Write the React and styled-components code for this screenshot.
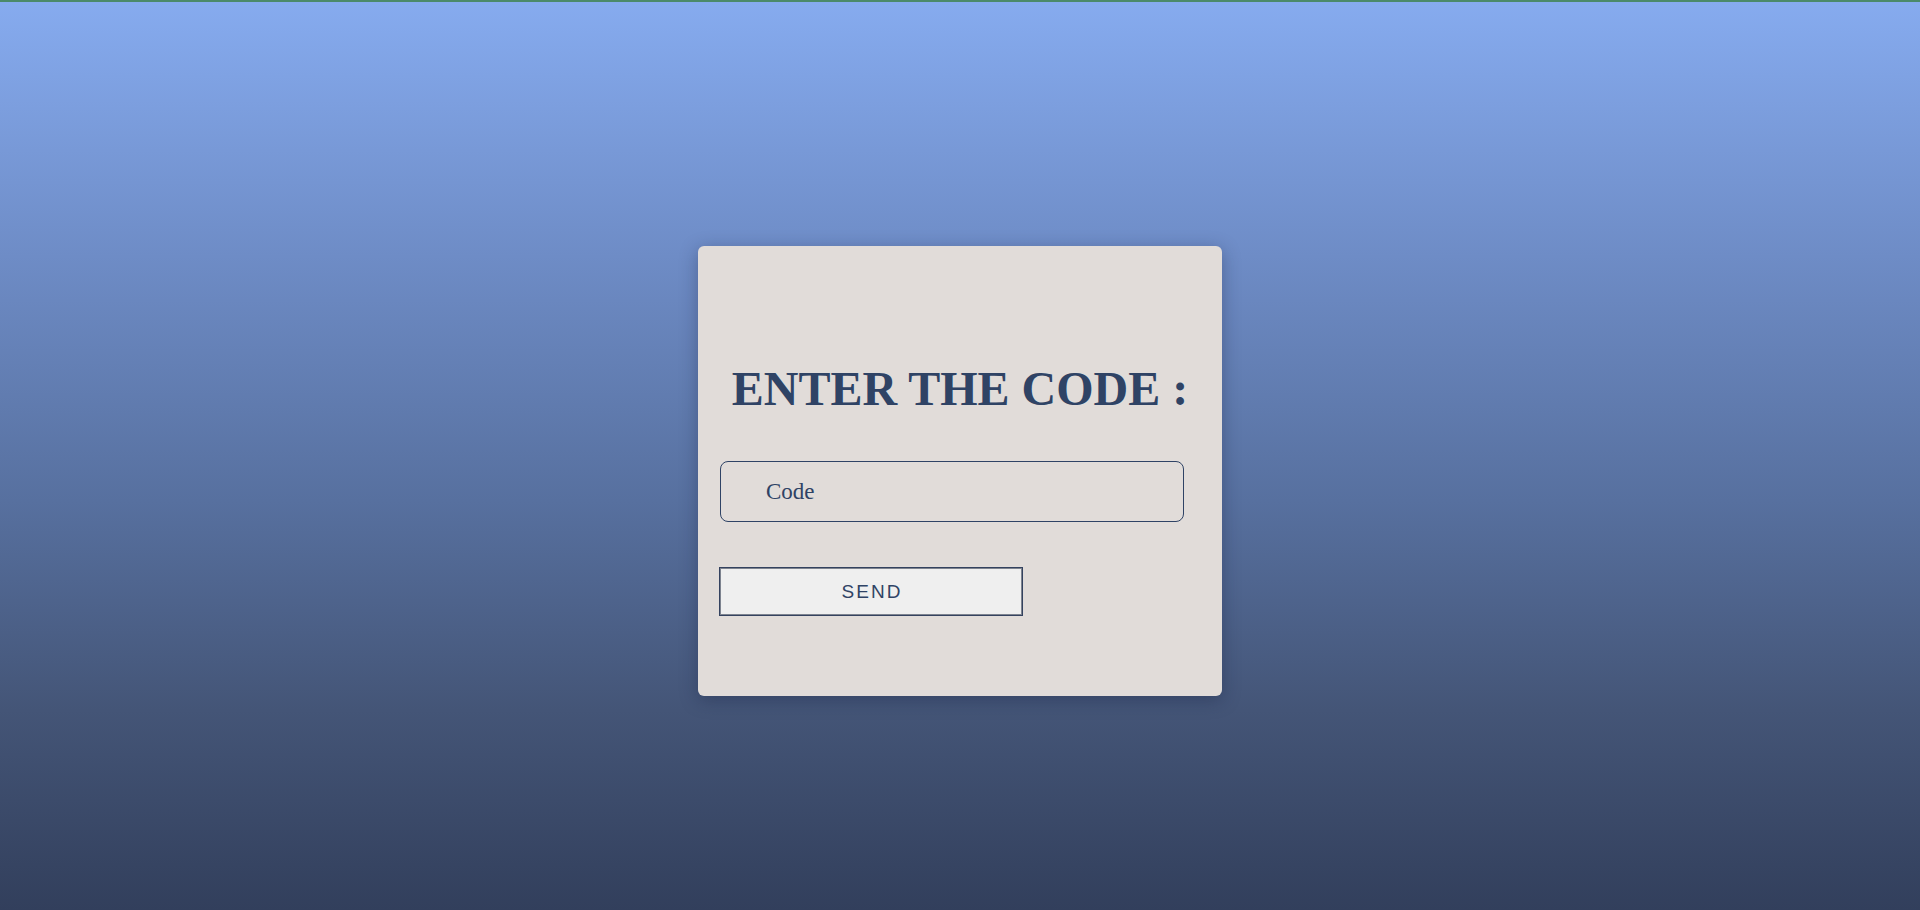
import styled, { createGlobalStyle } from 'styled-components';

const GlobalStyle = createGlobalStyle`
  * {
    box-sizing: border-box;
  }

  body {
    margin: 0;
    font-family: 'Liberation Serif', 'Times New Roman', serif;
  }
`;

const App = () => {
  return (
    <Page>
      <GlobalStyle />
      <Card>
        <Title>ENTER THE CODE :</Title>
        <Form onSubmit={(e) => e.preventDefault()}>
          <CodeInput type='text' placeholder='Code' />
          <SendButton type='submit'>SEND</SendButton>
        </Form>
      </Card>
    </Page>
  );
};

const Page = styled.main`
  min-height: 100vh;
  border-top: 2px solid #4b8a6a;
  padding-top: 244px;
  display: flex;
  flex-direction: column;
  align-items: center;
  background: linear-gradient(180deg, #86abef 0%, #6e8cc6 28%, #57709f 55%, #445577 78%, #323f5c 100%);
`;

const Card = styled.section`
  width: 524px;
  height: 450px;
  padding: 119px 22px 0;
  background: #e1dcd9;
  border-radius: 6px;
  box-shadow: 0 4px 18px rgba(20, 30, 60, 0.35);
`;

const Title = styled.h1`
  margin: 0 0 48px;
  font-family: 'Liberation Serif', 'Times New Roman', serif;
  font-size: 48px;
  line-height: 1;
  font-weight: 700;
  text-align: center;
  color: #2f4365;
  white-space: nowrap;
`;

const Form = styled.form`
  display: flex;
  flex-direction: column;
  align-items: flex-start;
  gap: 45px;
`;

const CodeInput = styled.input`
  width: 464px;
  height: 61px;
  padding: 0 0 0 45px;
  border: 1px solid #2f4365;
  border-radius: 8px;
  background: transparent;
  font-family: 'Liberation Serif', 'Times New Roman', serif;
  font-size: 23px;
  color: #2f4365;
  outline: none;

  &::placeholder {
    color: #2f4365;
    opacity: 1;
  }
`;

const SendButton = styled.button`
  width: 304px;
  height: 49px;
  margin-left: -1px;
  border: 1px solid #34425f;
  box-shadow: inset 0 0 0 1px #7d838f;
  background: #efefef;
  font-family: 'Liberation Sans', Arial, sans-serif;
  font-size: 19px;
  letter-spacing: 2px;
  text-indent: 2px;
  color: #2f4365;
  cursor: pointer;
`;

export default App;
